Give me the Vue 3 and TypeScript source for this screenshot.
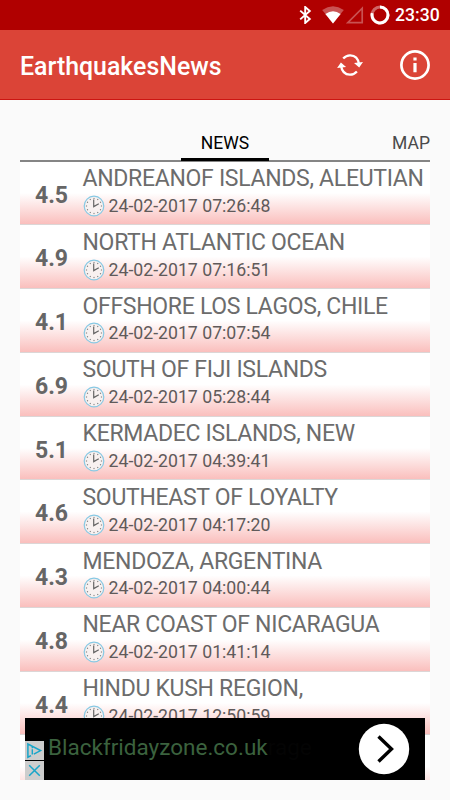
<script setup lang="ts">
interface Quake {
  magnitude: string
  place: string
  time: string
}

const quakes: Quake[] = [
  { magnitude: '4.5', place: 'ANDREANOF ISLANDS, ALEUTIAN', time: '24-02-2017 07:26:48' },
  { magnitude: '4.9', place: 'NORTH ATLANTIC OCEAN', time: '24-02-2017 07:16:51' },
  { magnitude: '4.1', place: 'OFFSHORE LOS LAGOS, CHILE', time: '24-02-2017 07:07:54' },
  { magnitude: '6.9', place: 'SOUTH OF FIJI ISLANDS', time: '24-02-2017 05:28:44' },
  { magnitude: '5.1', place: 'KERMADEC ISLANDS, NEW', time: '24-02-2017 04:39:41' },
  { magnitude: '4.6', place: 'SOUTHEAST OF LOYALTY', time: '24-02-2017 04:17:20' },
  { magnitude: '4.3', place: 'MENDOZA, ARGENTINA', time: '24-02-2017 04:00:44' },
  { magnitude: '4.8', place: 'NEAR COAST OF NICARAGUA', time: '24-02-2017 01:41:14' },
  { magnitude: '4.4', place: 'HINDU KUSH REGION,', time: '24-02-2017 12:50:59' },
]

const ticks: number[] = Array.from({ length: 12 }, (_, i) => i * 30)
</script>

<template>
  <div class="screen">
    <div class="status">
      <svg class="bluetooth" width="13" height="18" viewBox="0 0 13 18">
        <path d="M1.2 4.6 L10.8 13 L6.2 17 V1 L10.8 5 L1.2 13.4" fill="none" stroke="#fff" stroke-width="1.9" />
      </svg>
      <svg class="wifi" width="22" height="18" viewBox="0 0 22 18">
        <path d="M0.2 4 Q11 -3.4 21.8 4 L11 17.6 Z" fill="#fff" opacity=".32" />
        <path d="M3.4 8 Q11 2.6 18.6 8 L11 17.6 Z" fill="#fff" />
      </svg>
      <svg class="signal" width="18" height="18" viewBox="0 0 18 18">
        <path d="M16.2 2.2 V16.6 H1.8 Z" fill="none" stroke="#fff" stroke-width="1.7" opacity=".32" />
      </svg>
      <svg class="battery" width="20" height="20" viewBox="0 0 20 20">
        <circle cx="10" cy="10" r="8" fill="none" stroke="#fff" stroke-width="3" opacity=".4" />
        <path d="M10 2 A8 8 0 1 1 2.2 8.2" fill="none" stroke="#fff" stroke-width="3" />
      </svg>
      <span class="clock">23:30</span>
    </div>

    <header class="appbar">
      <h1>EarthquakesNews</h1>
      <svg class="refresh" width="28" height="24" viewBox="0 0 28 24">
        <g fill="none" stroke="#fff" stroke-width="2.3">
          <path d="M7.2 5.6 Q10.3 2.2 14.2 2.3 Q21.8 2.6 23 11" />
          <path d="M20.9 18.4 Q17.8 21.8 13.9 21.7 Q6.3 21.4 5.1 13" />
        </g>
        <path d="M18 10 L27 9 L23.2 14.6 Z M10.1 14 L1.1 15 L4.9 9.4 Z" fill="#fff" />
      </svg>
      <svg class="info" width="30" height="30" viewBox="0 0 30 30">
        <circle cx="15" cy="15" r="13.6" fill="none" stroke="#fff" stroke-width="2.7" />
        <path d="M13.4 7.6h3.2v3h-3.2z M13.4 13h3.2v9.3h-3.2z" fill="#fff" />
      </svg>
    </header>

    <main class="content">
      <nav class="tabs">
        <span class="tab active">NEWS</span>
        <span class="tab next">MAP</span>
      </nav>

      <div class="list">
        <article v-for="quake in quakes" :key="quake.time" class="row">
          <strong class="magnitude">{{ quake.magnitude }}</strong>
          <div class="details">
            <div class="place">{{ quake.place }}</div>
            <div class="when">
              <svg class="dial" width="22" height="22" viewBox="0 0 22 22">
                <circle cx="11" cy="11" r="9.8" fill="#f8f1f0" stroke="#87c9e4" stroke-width="1.2" />
                <path
                  v-for="angle in ticks"
                  :key="angle"
                  d="M11 2.9 V4.1"
                  stroke="#777"
                  stroke-width="1"
                  :transform="`rotate(${angle} 11 11)`"
                />
                <path d="M10.7 4.4 V11.6 L15.8 8.7" fill="none" stroke="#666" stroke-width="1.2" />
              </svg>
              <span class="time">{{ quake.time }}</span>
            </div>
          </div>
        </article>
        <article class="row"></article>

        <aside class="banner">
          <div class="badges">
            <svg width="19" height="19" viewBox="0 0 19 19">
              <rect width="19" height="19" fill="#cdcdcd" />
              <path d="M6 14.6 L2.9 16.2 V3 L15.6 9.6 L8.8 13.2" fill="none" stroke="#18a5c9" stroke-width="1.5" />
              <path d="M7.3 8.3 V13.6 M7.3 5.8 V7.2" stroke="#18a5c9" stroke-width="1.4" />
            </svg>
            <svg width="19" height="19" viewBox="0 0 19 19">
              <rect width="19" height="19" fill="#cdcdcd" />
              <path d="M4.2 4.2 L14.8 14.8 M14.8 4.2 L4.2 14.8" stroke="#18a5c9" stroke-width="1.5" />
            </svg>
          </div>
          <span class="link">Blackfridayzone.co.uk</span>
          <span class="faded">rage</span>
          <svg class="go" width="52" height="52" viewBox="0 0 52 52">
            <circle cx="26" cy="26" r="25.2" fill="#fff" />
            <path d="M20.5 13.5 L33.5 26 L20.5 38.5" fill="none" stroke="#000" stroke-width="3.4" />
          </svg>
        </aside>
      </div>
    </main>
  </div>
</template>

<style>
body {
  margin: 0;
  background: #fafafa;
}
</style>

<style scoped>
.screen {
  width: 450px;
  height: 800px;
  overflow: hidden;
  background: #fafafa;
  font-family: Roboto, "Liberation Sans", sans-serif;
}

.status {
  display: flex;
  align-items: center;
  justify-content: flex-end;
  box-sizing: border-box;
  height: 30px;
  padding-right: 10px;
  background: #b00000;
}

.bluetooth {
  margin-right: 10px;
}

.wifi {
  margin-right: 2px;
}

.signal {
  margin-right: 6px;
}

.battery {
  margin-right: 5px;
}

.clock {
  width: 45px;
  color: #fff;
  font-size: 17.6px;
  font-weight: 500;
  line-height: 32px;
  white-space: nowrap;
}

.appbar {
  display: flex;
  align-items: center;
  box-sizing: border-box;
  height: 70px;
  padding: 0 20px;
  border-bottom: 1px solid #cc1512;
  background: #db4437;
  color: #fff;
}

h1 {
  flex: 1;
  margin: 4px 0 0;
  font-size: 24.9px;
  font-weight: 500;
  line-height: 30px;
}

.refresh {
  margin-right: 36px;
}

.content {
  padding: 25px 20px 0;
}

.tabs {
  display: grid;
  grid-template-columns: 1fr 88px 1fr;
  box-sizing: border-box;
  height: 36.5px;
  border-bottom: 2px solid #858585;
  color: #4a4a4a;
  font-size: 17.5px;
  line-height: 37px;
}

.tab.active {
  grid-column: 2;
  box-sizing: border-box;
  height: 35.5px;
  border-bottom: 3px solid #000;
  color: #000;
  text-align: center;
}

.tab.next {
  text-align: right;
}

.list {
  position: relative;
  height: 618.5px;
  overflow: hidden;
  background: #fff;
}

.row {
  display: flex;
  box-sizing: border-box;
  height: 63.75px;
  border-bottom: 1px solid #dcd6d6;
  background: linear-gradient(#fff 50%, #fabfbd 100%);
}

.magnitude {
  width: 62.5px;
  box-sizing: border-box;
  padding-left: 15px;
  color: #666;
  font-size: 23px;
  font-weight: 700;
  line-height: 67px;
}

.details {
  flex: 1;
  white-space: nowrap;
}

.place {
  padding-top: 2.6px;
  color: #6c6c6c;
  font-size: 23px;
  letter-spacing: -0.3px;
  line-height: 30px;
}

.when {
  display: flex;
  align-items: center;
  height: 23.4px;
  color: #605a5a;
  font-size: 17.7px;
}

.time {
  margin-left: 4px;
}

.banner {
  position: absolute;
  left: 5px;
  right: 5px;
  bottom: 0;
  display: flex;
  align-items: center;
  height: 62px;
  background: #000;
}

.badges {
  display: flex;
  flex-direction: column;
  align-self: flex-end;
  gap: 1px;
}

.badges svg {
  display: block;
}

.link {
  margin: 0 0 4px 4px;
  color: #3b623e;
  font-size: 22.5px;
}

.faded {
  margin-bottom: 4px;
  color: #040404;
  font-size: 22.5px;
}

.go {
  margin: 0 15px 0 auto;
}
</style>
